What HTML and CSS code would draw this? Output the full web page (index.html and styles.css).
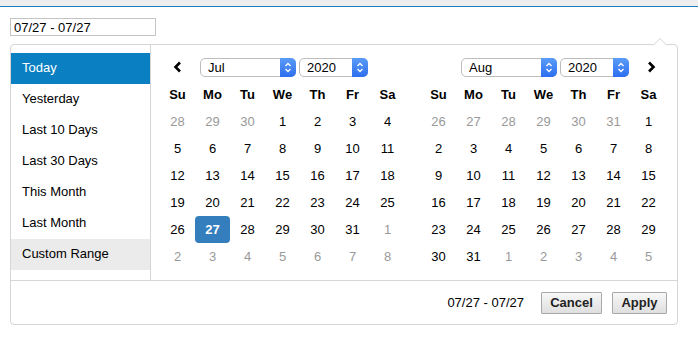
FILE: index.html
```html
<!DOCTYPE html>
<html lang="en">
<head>
    <meta charset="UTF-8">
    <title>Date Range Picker</title>
    <link rel="stylesheet" href="styles.css">
</head>
<body>

<div class="topbar"></div>

<div class="page">
    <input type="text" class="date-input" value="07/27 - 07/27">

    <!-- Picker dropdown -->
    <div class="picker">
        <div class="picker-body">
            <ul class="ranges">
                <li class="active">Today</li>
                <li>Yesterday</li>
                <li>Last 10 Days</li>
                <li>Last 30 Days</li>
                <li>This Month</li>
                <li>Last Month</li>
                <li class="hover">Custom Range</li>
            </ul>

            <!-- July -->
            <div class="calendar">
                <div class="cal-head">
                    <span class="nav">
                        <svg width="9" height="12" viewBox="0 0 9 12"><polyline points="7,1.5 2.5,6 7,10.5" fill="none" stroke="#000" stroke-width="2.6"/></svg>
                    </span>
                    <div class="selects">
                        <div class="select month">Jul<span class="arrow"><svg width="8" height="11" viewBox="0 0 8 11"><polyline points="1.5,4 4,1.5 6.5,4" fill="none" stroke="#fff" stroke-width="1.3"/><polyline points="1.5,7 4,9.5 6.5,7" fill="none" stroke="#fff" stroke-width="1.3"/></svg></span></div>
                        <div class="select year">2020<span class="arrow"><svg width="8" height="11" viewBox="0 0 8 11"><polyline points="1.5,4 4,1.5 6.5,4" fill="none" stroke="#fff" stroke-width="1.3"/><polyline points="1.5,7 4,9.5 6.5,7" fill="none" stroke="#fff" stroke-width="1.3"/></svg></span></div>
                    </div>
                    <span class="nav"></span>
                </div>
                <div class="grid">
                    <span class="dow">Su</span><span class="dow">Mo</span><span class="dow">Tu</span><span class="dow">We</span><span class="dow">Th</span><span class="dow">Fr</span><span class="dow">Sa</span>
                    <span class="off">28</span><span class="off">29</span><span class="off">30</span><span>1</span><span>2</span><span>3</span><span>4</span>
                    <span>5</span><span>6</span><span>7</span><span>8</span><span>9</span><span>10</span><span>11</span>
                    <span>12</span><span>13</span><span>14</span><span>15</span><span>16</span><span>17</span><span>18</span>
                    <span>19</span><span>20</span><span>21</span><span>22</span><span>23</span><span>24</span><span>25</span>
                    <span>26</span><span class="today">27</span><span>28</span><span>29</span><span>30</span><span>31</span><span class="off">1</span>
                    <span class="off">2</span><span class="off">3</span><span class="off">4</span><span class="off">5</span><span class="off">6</span><span class="off">7</span><span class="off">8</span>
                </div>
            </div>

            <!-- August -->
            <div class="calendar">
                <div class="cal-head">
                    <span class="nav"></span>
                    <div class="selects">
                        <div class="select month">Aug<span class="arrow"><svg width="8" height="11" viewBox="0 0 8 11"><polyline points="1.5,4 4,1.5 6.5,4" fill="none" stroke="#fff" stroke-width="1.3"/><polyline points="1.5,7 4,9.5 6.5,7" fill="none" stroke="#fff" stroke-width="1.3"/></svg></span></div>
                        <div class="select year">2020<span class="arrow"><svg width="8" height="11" viewBox="0 0 8 11"><polyline points="1.5,4 4,1.5 6.5,4" fill="none" stroke="#fff" stroke-width="1.3"/><polyline points="1.5,7 4,9.5 6.5,7" fill="none" stroke="#fff" stroke-width="1.3"/></svg></span></div>
                    </div>
                    <span class="nav next">
                        <svg width="9" height="12" viewBox="0 0 9 12"><polyline points="2,1.5 6.5,6 2,10.5" fill="none" stroke="#000" stroke-width="2.6"/></svg>
                    </span>
                </div>
                <div class="grid">
                    <span class="dow">Su</span><span class="dow">Mo</span><span class="dow">Tu</span><span class="dow">We</span><span class="dow">Th</span><span class="dow">Fr</span><span class="dow">Sa</span>
                    <span class="off">26</span><span class="off">27</span><span class="off">28</span><span class="off">29</span><span class="off">30</span><span class="off">31</span><span>1</span>
                    <span>2</span><span>3</span><span>4</span><span>5</span><span>6</span><span>7</span><span>8</span>
                    <span>9</span><span>10</span><span>11</span><span>12</span><span>13</span><span>14</span><span>15</span>
                    <span>16</span><span>17</span><span>18</span><span>19</span><span>20</span><span>21</span><span>22</span>
                    <span>23</span><span>24</span><span>25</span><span>26</span><span>27</span><span>28</span><span>29</span>
                    <span>30</span><span>31</span><span class="off">1</span><span class="off">2</span><span class="off">3</span><span class="off">4</span><span class="off">5</span>
                </div>
            </div>
        </div>

        <!-- Footer -->
        <div class="picker-footer">
            <span class="selected">07/27 - 07/27</span>
            <button class="btn cancel">Cancel</button>
            <button class="btn apply">Apply</button>
        </div>
    </div>
</div>

</body>
</html>
```

FILE: styles.css
```css
body {
    margin: 0;
    background-color: #fff;
    font-family: "Liberation Sans", Arial, sans-serif;
    font-size: 13px;
    color: #000;
}
.topbar {
    height: 6px;
    background-color: #eeeeee;
    border-bottom: 1px solid #1b7cbb;
}
.page {
    padding: 11px 10px 0 10px;
}
.date-input {
    display: block;
    box-sizing: border-box;
    width: 146px;
    height: 18px;
    margin: 0;
    padding: 0 3px;
    border: 1px solid #c4c4c4;
    border-radius: 0;
    font-family: "Liberation Sans", Arial, sans-serif;
    font-size: 13px;
    color: #000;
    outline: none;
}
.picker {
    position: relative;
    width: 666px;
    margin-top: 8px;
    border: 1px solid #d6d6d6;
    border-radius: 4px;
    background-color: #fff;
}
/* little caret pointing at the input */
.picker::before {
    content: "";
    position: absolute;
    top: -7px;
    right: 10px;
    border-left: 7px solid transparent;
    border-right: 7px solid transparent;
    border-bottom: 7px solid #d6d6d6;
}
.picker::after {
    content: "";
    position: absolute;
    top: -6px;
    right: 11px;
    border-left: 6px solid transparent;
    border-right: 6px solid transparent;
    border-bottom: 6px solid #fff;
}
.picker-body {
    display: flex;
    height: 235px;
}
.ranges {
    list-style: none;
    margin: 0;
    padding: 8px 0 0 0;
    width: 139px;
    border-right: 1px solid #d6d6d6;
}
.ranges li {
    height: 31px;
    line-height: 30px;
    padding-left: 11px;
}
.ranges li.active {
    background-color: #0a80c2;
    color: #fff;
}
.ranges li.hover {
    background-color: #ebebeb;
}
.calendar {
    padding: 8px 8px 10px 9px;
}
.calendar + .calendar {
    padding-left: 8px;
}
.cal-head {
    display: grid;
    grid-template-columns: 35px 175px 35px;
    height: 28px;
    align-items: center;
}
.nav {
    display: flex;
    justify-content: center;
    align-items: center;
    height: 28px;
}
.nav svg {
    display: block;
}
.next {
    padding-left: 6px;
}
.selects {
    display: flex;
    gap: 3px;
    padding-left: 5px;
}
.select {
    position: relative;
    box-sizing: border-box;
    height: 19px;
    line-height: 17px;
    border: 1px solid #bdbdbd;
    border-radius: 5px;
    padding-left: 7px;
    background-color: #fff;
    font-size: 13px;
}
.select.month {
    width: 96px;
}
.select.year {
    width: 69px;
}
.select .arrow {
    position: absolute;
    top: -1px;
    right: -1px;
    width: 16px;
    height: 19px;
    border-radius: 0 5px 5px 0;
    background: linear-gradient(#5b9cf8, #2d6eef);
    display: flex;
    justify-content: center;
    align-items: center;
}
.select .arrow svg {
    display: block;
}
.grid {
    display: grid;
    grid-template-columns: repeat(7, 35px);
    grid-auto-rows: 27px;
}
.grid span {
    display: flex;
    justify-content: center;
    align-items: center;
}
.grid .dow {
    font-weight: bold;
}
.grid .off {
    color: #999;
}
.grid .today {
    background-color: #357ebd;
    color: #fff;
    font-weight: bold;
    border-radius: 4px;
}
.picker-footer {
    display: flex;
    justify-content: flex-end;
    align-items: center;
    height: 43px;
    border-top: 1px solid #d6d6d6;
    padding-right: 10px;
}
.selected {
    margin-right: 17px;
}
.btn {
    height: 22px;
    padding: 0 8px;
    border: 1px solid #a9a9a9;
    border-radius: 1px;
    background: linear-gradient(#f7f7f7, #dfdfdf);
    font-family: "Liberation Sans", Arial, sans-serif;
    font-size: 13px;
    font-weight: bold;
    color: #222;
}
.btn.cancel {
    width: 61px;
    margin-right: 10px;
}
.btn.apply {
    width: 55px;
}
```
